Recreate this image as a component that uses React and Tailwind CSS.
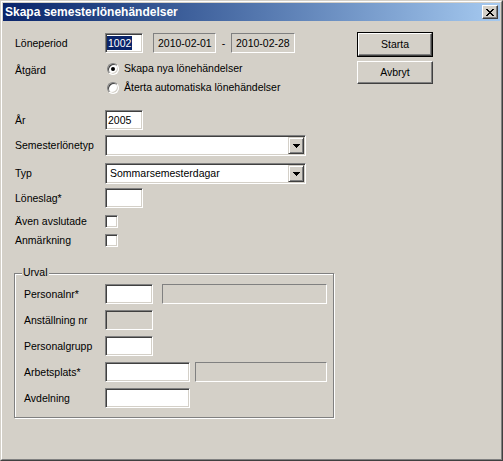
import React from "react";

const sunken =
  "border border-t-[#808080] border-l-[#808080] border-b-white border-r-white shadow-[inset_1px_1px_0_#404040,inset_-1px_-1px_0_#d4d0c8]";
const flat =
  "border border-t-[#808080] border-l-[#808080] border-b-white border-r-white bg-[#d4d0c8]";
const raised =
  "border border-t-white border-l-white border-b-[#404040] border-r-[#404040] shadow-[inset_-1px_-1px_0_#808080] bg-[#d4d0c8]";

function Arrow() {
  return (
    <svg width="7" height="4" viewBox="0 0 7 4" shapeRendering="crispEdges">
      <path d="M0 0h7v1h-1v1h-1v1h-1v1h-1v-1h-1v-1h-1v-1h-1z" fill="#000" />
    </svg>
  );
}

function Combo({ value }) {
  return (
    <div className={`${sunken} bg-white w-[201px] h-[21px] flex p-[1px]`}>
      <div className="flex-1 flex items-center pl-[3px] leading-none">{value}</div>
      <div className="w-[16px] h-full border border-t-[#d4d0c8] border-l-[#d4d0c8] border-b-[#404040] border-r-[#404040] shadow-[inset_1px_1px_0_#fff,inset_-1px_-1px_0_#808080] bg-[#d4d0c8] flex items-center justify-center">
        <Arrow />
      </div>
    </div>
  );
}

function Radio({ checked }) {
  return (
    <div className="w-[12px] h-[12px] rounded-full border border-t-[#808080] border-l-[#808080] border-b-white border-r-white shadow-[inset_1px_1px_0_#404040,inset_-1px_-1px_0_#d4d0c8] bg-white flex items-center justify-center shrink-0">
      {checked && <div className="w-[4px] h-[4px] rounded-full bg-black" />}
    </div>
  );
}

function Check() {
  return <div className={`${sunken} bg-white w-[13px] h-[13px]`} />;
}

function Label({ children, w = "w-[90px]" }) {
  return <div className={`${w} shrink-0 leading-none`}>{children}</div>;
}

export default function App() {
  return (
    <div className="w-[503px] h-[461px] border border-t-[#d4d0c8] border-l-[#d4d0c8] border-b-[#404040] border-r-[#404040] bg-[#d4d0c8] font-['Liberation_Sans',Arial,sans-serif] text-[10.5px] text-black select-none">
      <div className="h-full border border-t-white border-l-white border-b-[#808080] border-r-[#808080] p-px flex flex-col">
        {/* Title bar */}
        <div className="h-[18px] shrink-0 bg-gradient-to-r from-[#0a246a] to-[#a6caf0] flex items-center justify-between pl-[2px] pr-[2px]">
          <span className="text-white font-bold text-[12px] leading-none">Skapa semesterlönehändelser</span>
          <div className={`${raised} w-[16px] h-[14px] flex items-center justify-center`}>
            <svg width="8" height="7" viewBox="0 0 8 7" shapeRendering="crispEdges">
              <path
                d="M0 0h2v1h1v1h2v-1h1v-1h2v1h-1v1h-1v1h-1v1h1v1h1v1h1v1h-2v-1h-1v-1h-2v1h-1v1h-2v-1h1v-1h1v-1h1v-1h-1v-1h-1v-1h-1z"
                fill="#000"
              />
            </svg>
          </div>
        </div>

        {/* Content */}
        <div className="flex flex-1">
          <div className="w-[354px] pl-[12px] flex flex-col">
            {/* Löneperiod */}
            <div className="mt-[12px] h-[20px] flex items-center">
              <Label>Löneperiod</Label>
              <div className={`${sunken} bg-white w-[38px] h-[20px] flex items-center pl-[1px]`}>
                <span className="bg-[#0a246a] text-white leading-[14px] px-px">1002</span>
              </div>
              <div className={`${flat} ml-[10px] w-[63px] h-[20px] flex items-center pl-[4px] leading-none`}>
                2010-02-01
              </div>
              <div className="w-[15px] text-center leading-none">-</div>
              <div className={`${flat} w-[64px] h-[20px] flex items-center pl-[4px] leading-none`}>
                2010-02-28
              </div>
            </div>

            {/* Åtgärd */}
            <div className="mt-[6px] h-[19px] flex items-center">
              <div className="w-[90px] shrink-0 leading-none pt-[3px]">Åtgärd</div>
              <div className="ml-[2px] flex items-center gap-[5px]">
                <Radio checked />
                <span className="leading-none">Skapa nya lönehändelser</span>
              </div>
            </div>
            <div className="h-[19px] flex items-center">
              <div className="w-[90px] shrink-0" />
              <div className="ml-[2px] flex items-center gap-[5px]">
                <Radio />
                <span className="leading-none">Återta automatiska lönehändelser</span>
              </div>
            </div>

            {/* År */}
            <div className="mt-[13px] h-[20px] flex items-center">
              <Label>År</Label>
              <div className={`${sunken} bg-white w-[38px] h-[20px] flex items-center pl-[2px] leading-none`}>2005</div>
            </div>

            <div className="mt-[5px] h-[21px] flex items-center">
              <Label>Semesterlönetyp</Label>
              <Combo value="" />
            </div>

            <div className="mt-[7px] h-[21px] flex items-center">
              <Label>Typ</Label>
              <Combo value="Sommarsemesterdagar" />
            </div>

            <div className="mt-[4px] h-[20px] flex items-center">
              <Label>Löneslag*</Label>
              <div className={`${sunken} bg-white w-[38px] h-[20px]`} />
            </div>

            <div className="mt-[7px] h-[13px] flex items-center">
              <Label>Även avslutade</Label>
              <Check />
            </div>
            <div className="mt-[6px] h-[13px] flex items-center">
              <Label>Anmärkning</Label>
              <Check />
            </div>

            {/* Urval group */}
            <div className="relative mt-[26px] -ml-px w-[320px] border border-[#808080] shadow-[inset_1px_1px_0_#fff,1px_1px_0_#fff] pl-[9px] pt-[10px] pb-[9px] flex flex-col gap-[6px]">
              <span className="absolute left-[7px] -top-[8px] bg-[#d4d0c8] px-[1px] leading-[13px]">Urval</span>
              <div className="h-[20px] flex items-center">
                <Label w="w-[81px]">Personalnr*</Label>
                <div className={`${sunken} bg-white w-[48px] h-[20px]`} />
                <div className={`${flat} ml-[9px] w-[165px] h-[20px]`} />
              </div>
              <div className="h-[20px] flex items-center">
                <Label w="w-[81px]">Anställning nr</Label>
                <div className={`${sunken} bg-[#d4d0c8] w-[48px] h-[20px]`} />
              </div>
              <div className="h-[20px] flex items-center">
                <Label w="w-[81px]">Personalgrupp</Label>
                <div className={`${sunken} bg-white w-[48px] h-[20px]`} />
              </div>
              <div className="h-[20px] flex items-center">
                <Label w="w-[81px]">Arbetsplats*</Label>
                <div className={`${sunken} bg-white w-[85px] h-[20px]`} />
                <div className={`${flat} ml-[5px] w-[132px] h-[20px]`} />
              </div>
              <div className="h-[20px] flex items-center">
                <Label w="w-[81px]">Avdelning</Label>
                <div className={`${sunken} bg-white w-[85px] h-[20px]`} />
              </div>
            </div>
          </div>

          {/* Buttons */}
          <div className="flex flex-col pt-[11px] gap-[4px]">
            <div className="w-[76px] h-[25px] border border-black flex">
              <div className={`${raised} flex-1 flex items-center justify-center leading-none`}>Starta</div>
            </div>
            <div className={`${raised} w-[76px] h-[23px] flex items-center justify-center leading-none`}>Avbryt</div>
          </div>
        </div>
      </div>
    </div>
  );
}
